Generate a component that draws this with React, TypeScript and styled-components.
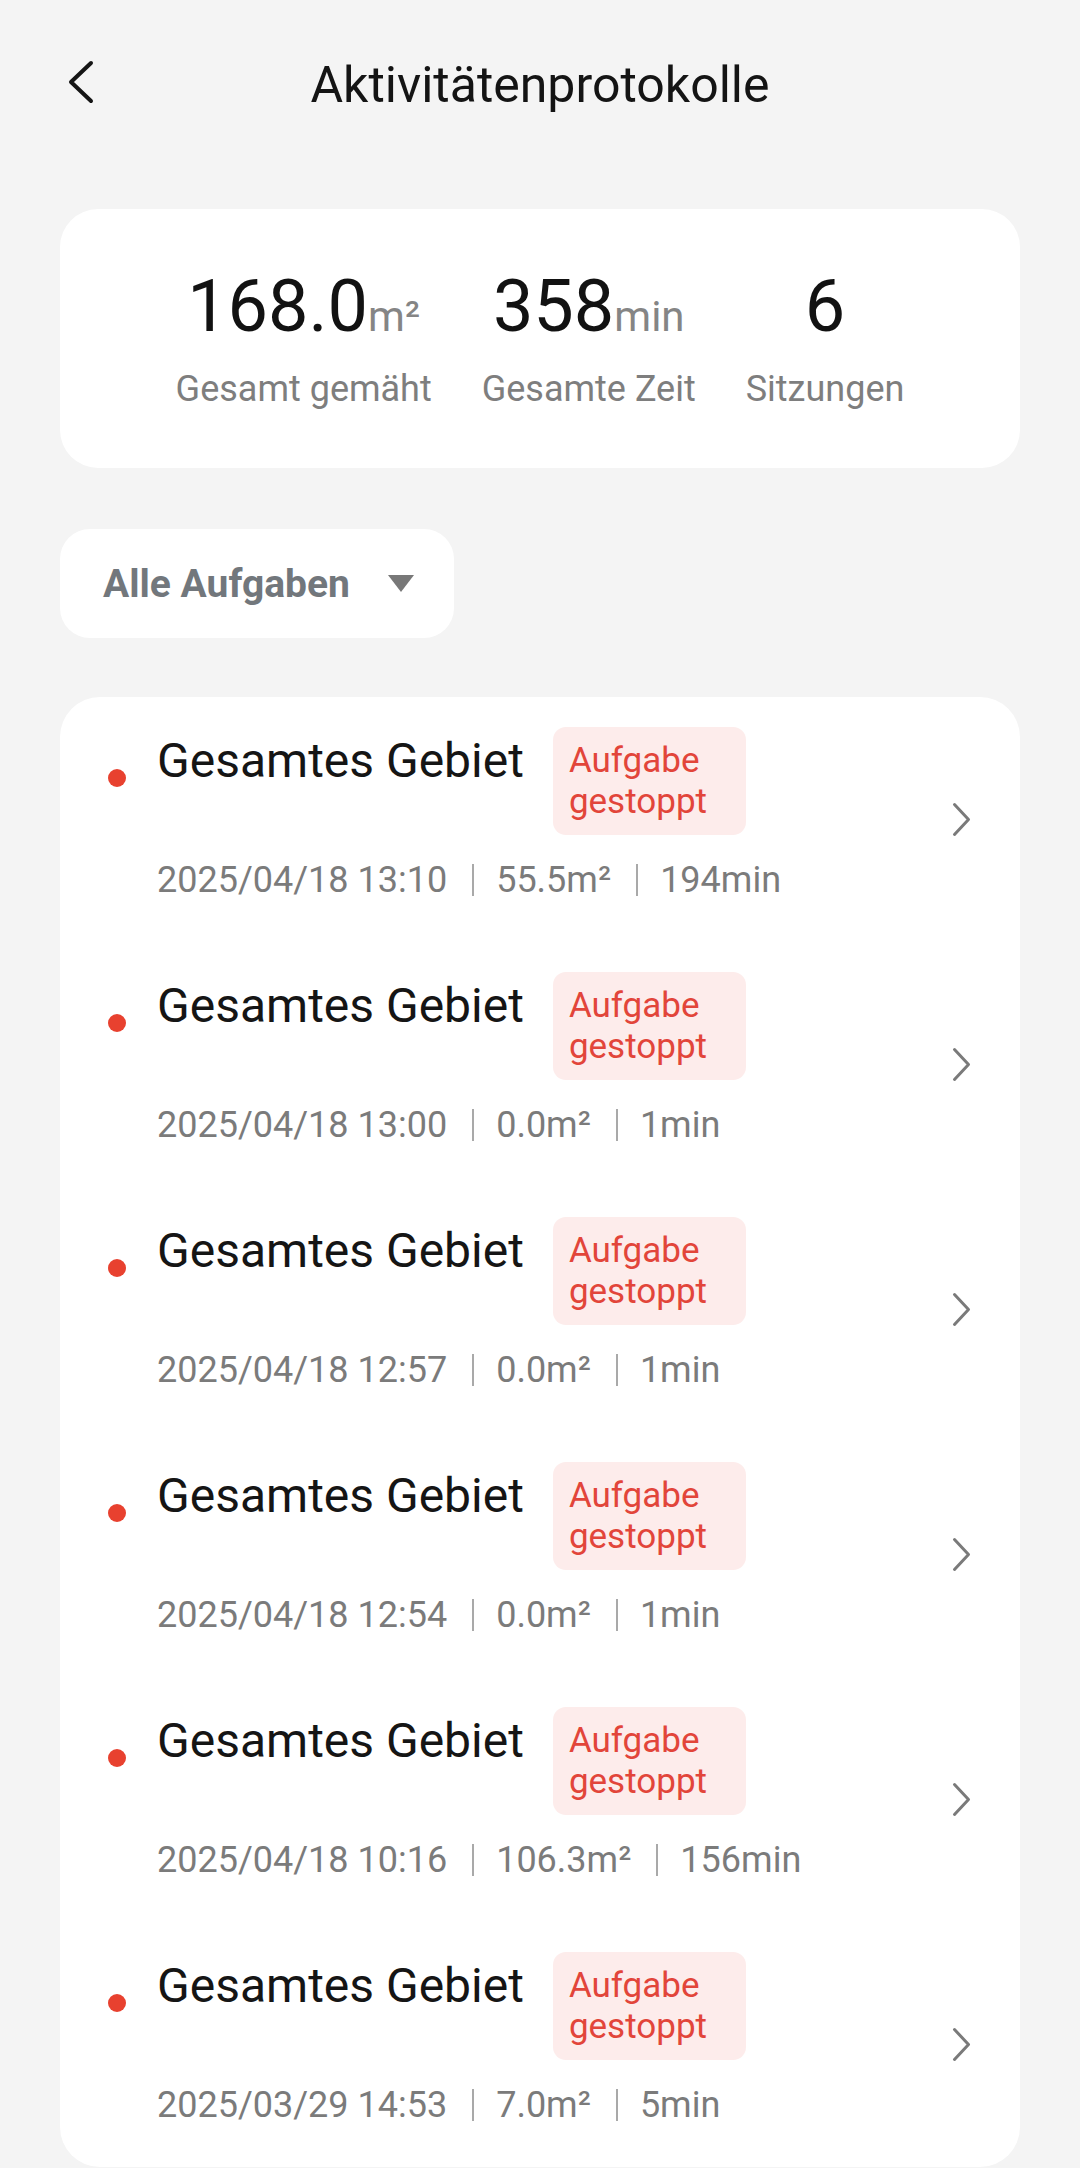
import React from "react";
import styled, { createGlobalStyle } from "styled-components";

const GlobalStyle = createGlobalStyle`
  html, body {
    margin: 0;
    padding: 0;
    background: #f4f4f4;
  }
  body {
    font-family: Roboto, "Noto Sans", "Liberation Sans", sans-serif;
    -webkit-font-smoothing: antialiased;
  }
  * { box-sizing: border-box; }
`;

const Page = styled.div`
  width: 1080px;
  min-height: 2168px;
  background: #f4f4f4;
  padding: 0 60px;
  display: flex;
  flex-direction: column;
`;

const Header = styled.header`
  display: grid;
  grid-template-columns: 1fr auto 1fr;
  align-items: start;
  padding-top: 55px;
  margin: 0 -60px 94px;
  padding-left: 67px;
  padding-right: 67px;
`;

const BackButton = styled.button`
  justify-self: start;
  margin-top: 4px;
  width: 28px;
  height: 46px;
  padding: 0;
  border: 0;
  background: transparent;
  display: flex;
`;

const Title = styled.h1`
  margin: 0;
  font-size: 50px;
  line-height: 60px;
  font-weight: 400;
  color: #141414;
  text-align: center;
`;

const Card = styled.section`
  background: #ffffff;
  border-radius: 38px;
`;

const StatsCard = styled(Card)`
  display: flex;
  justify-content: center;
  gap: 50px;
  padding: 56px 0 58px;
`;

const Stat = styled.div`
  display: flex;
  flex-direction: column;
  align-items: center;
  gap: 20px;
`;

const StatValue = styled.div`
  font-size: 72px;
  line-height: 84px;
  height: 84px;
  color: #121212;
  white-space: nowrap;
`;

const StatUnit = styled.span`
  font-size: 42px;
  line-height: 1;
  color: #858585;
`;

const StatLabel = styled.div`
  font-size: 36px;
  line-height: 41px;
  color: #7e7e7e;
  white-space: nowrap;
`;

const FilterButton = styled.button`
  align-self: flex-start;
  margin-top: 61px;
  height: 109px;
  display: flex;
  align-items: center;
  gap: 38px;
  padding: 0 40px 0 43px;
  border: 0;
  border-radius: 30px;
  background: #ffffff;
  font-family: inherit;
  font-size: 39px;
  font-weight: 700;
  color: #72777c;
`;

const ListCard = styled(Card)`
  margin-top: 59px;
  border-radius: 40px;
  display: flex;
  flex-direction: column;
`;

const Row = styled.div`
  display: flex;
  align-items: center;
  padding: 0 48px;
`;

const RowMain = styled.div`
  flex: 1;
  display: flex;
  align-items: flex-start;
  padding: 30px 0 41px;
`;

const Dot = styled.span`
  flex: none;
  width: 18px;
  height: 18px;
  margin-top: 42px;
  border-radius: 50%;
  background: #e8412f;
`;

const RowContent = styled.div`
  margin-left: 31px;
  display: flex;
  flex-direction: column;
`;

const TitleLine = styled.div`
  display: flex;
  align-items: flex-start;
  gap: 29px;
`;

const RowTitle = styled.div`
  margin-top: 6px;
  font-size: 48px;
  line-height: 56px;
  color: #151515;
  white-space: nowrap;
`;

const Badge = styled.span`
  width: 193px;
  padding: 13px 16px 13px;
  border-radius: 13px;
  background: #fdeceb;
  color: #e2453a;
  font-size: 35px;
  line-height: 41px;
`;

const Meta = styled.div`
  margin-top: 24px;
  display: flex;
  align-items: center;
  font-size: 36px;
  line-height: 42px;
  color: #7b7b7b;
  white-space: nowrap;
`;

const Separator = styled.span`
  width: 2px;
  height: 32px;
  margin: 0 22px 0 25px;
  background: #a9a9a9;
`;

const ChevronWrap = styled.span`
  flex: none;
  display: flex;
  width: 21px;
  height: 37px;
`;

type Session = { date: string; area: string; time: string };

const sessions: Session[] = [
  { date: "2025/04/18 13:10", area: "55.5m²", time: "194min" },
  { date: "2025/04/18 13:00", area: "0.0m²", time: "1min" },
  { date: "2025/04/18 12:57", area: "0.0m²", time: "1min" },
  { date: "2025/04/18 12:54", area: "0.0m²", time: "1min" },
  { date: "2025/04/18 10:16", area: "106.3m²", time: "156min" },
  { date: "2025/03/29 14:53", area: "7.0m²", time: "5min" },
];

export default function App() {
  return (
    <>
      <GlobalStyle />
      <Page>
        <Header>
          <BackButton aria-label="Zurück">
            <svg width="28" height="46" viewBox="0 0 28 46" fill="none">
              <path
                d="M24 4 L4 23 L24 42"
                stroke="#151515"
                strokeWidth="4"
                strokeLinecap="round"
                strokeLinejoin="round"
              />
            </svg>
          </BackButton>
          <Title>Aktivitätenprotokolle</Title>
          <span />
        </Header>

        <StatsCard>
          <Stat>
            <StatValue>
              168.0<StatUnit>m²</StatUnit>
            </StatValue>
            <StatLabel>Gesamt gemäht</StatLabel>
          </Stat>
          <Stat>
            <StatValue>
              358<StatUnit>min</StatUnit>
            </StatValue>
            <StatLabel>Gesamte Zeit</StatLabel>
          </Stat>
          <Stat>
            <StatValue>6</StatValue>
            <StatLabel>Sitzungen</StatLabel>
          </Stat>
        </StatsCard>

        <FilterButton>
          Alle Aufgaben
          <svg width="26" height="17" viewBox="0 0 26 17">
            <path d="M0 0 H26 L13 17 Z" fill="#787878" />
          </svg>
        </FilterButton>

        <ListCard>
          {sessions.map((s, i) => (
            <Row key={i}>
              <RowMain>
                <Dot />
                <RowContent>
                  <TitleLine>
                    <RowTitle>Gesamtes Gebiet</RowTitle>
                    <Badge>Aufgabe gestoppt</Badge>
                  </TitleLine>
                  <Meta>
                    {s.date}
                    <Separator />
                    {s.area}
                    <Separator />
                    {s.time}
                  </Meta>
                </RowContent>
              </RowMain>
              <ChevronWrap>
                <svg width="21" height="37" viewBox="0 0 21 37" fill="none">
                  <path
                    d="M3.5 3.5 L17.5 18.5 L3.5 33.5"
                    stroke="#7a7a7a"
                    strokeWidth="3"
                    strokeLinecap="round"
                    strokeLinejoin="round"
                  />
                </svg>
              </ChevronWrap>
            </Row>
          ))}
        </ListCard>
      </Page>
    </>
  );
}
